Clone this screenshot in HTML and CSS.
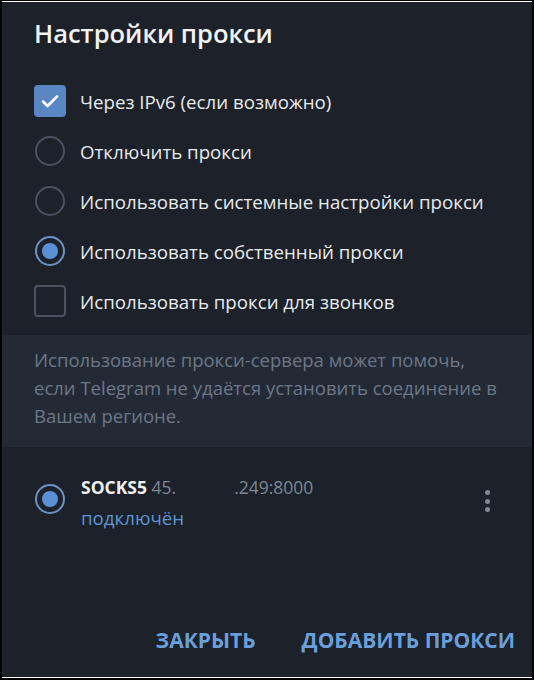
FILE: index.html
```html
<!DOCTYPE html>
<html lang="ru">
<head>
  <meta charset="UTF-8">
  <title>Настройки прокси</title>
  <link rel="stylesheet" href="styles.css">
</head>
<body>
  <div class="dialog">
    <h1 class="title">Настройки прокси</h1>

    <div class="options">
      <div class="option">
        <span class="mark"><span class="check checked">
          <svg width="18" height="14" viewBox="0 0 18 14"><path d="M2 7.5l4.5 4.5L16 2.5" fill="none" stroke="#fff" stroke-width="2.6" stroke-linecap="round" stroke-linejoin="round"/></svg>
        </span></span>
        <span class="label">Через IPv6 (если возможно)</span>
      </div>
      <div class="option">
        <span class="mark"><span class="radio"></span></span>
        <span class="label">Отключить прокси</span>
      </div>
      <div class="option">
        <span class="mark"><span class="radio"></span></span>
        <span class="label">Использовать системные настройки прокси</span>
      </div>
      <div class="option">
        <span class="mark"><span class="radio on"></span></span>
        <span class="label">Использовать собственный прокси</span>
      </div>
      <div class="option">
        <span class="mark"><span class="check"></span></span>
        <span class="label">Использовать прокси для звонков</span>
      </div>
    </div>

    <div class="about">
      Использование прокси-сервера может помочь, если Telegram не удаётся установить соединение в Вашем регионе.
    </div>

    <div class="proxy">
      <span class="mark"><span class="radio on"></span></span>
      <div class="proxy-info">
        <div class="proxy-addr"><b>SOCKS5</b> 45.<span class="hidden-ip"></span>.249:8000</div>
        <div class="proxy-status">подключён</div>
      </div>
      <span class="more"><i></i><i></i><i></i></span>
    </div>

    <div class="actions">
      <button class="btn">Закрыть</button>
      <button class="btn">Добавить прокси</button>
    </div>
  </div>
</body>
</html>
```

FILE: styles.css
```css
html, body {
  margin: 0;
  height: 100%;
}
body {
  background-color: #000;
  font-family: "Open Sans", "Noto Sans", sans-serif;
  padding: 1px 2px 2px 2px;
  box-sizing: border-box;
}
.dialog {
  background-color: #1c212a;
  height: 100%;
  box-sizing: border-box;
  border-top: 1px solid #fff;
  border-bottom: 1px solid #fff;
  display: flex;
  flex-direction: column;
}
.title {
  margin: 0;
  padding: 14px 32px 0;
  font-size: 25.5px;
  font-weight: 600;
  line-height: 34px;
  color: #f3f3f3;
}
.options {
  padding: 26px 32px 0;
}
.option {
  display: flex;
  align-items: center;
  height: 50px;
}
.mark {
  width: 32px;
  display: flex;
  justify-content: center;
  flex-shrink: 0;
}
.label {
  font-size: 18.7px;
  color: #e8eaec;
  margin-left: 14px;
}
.check {
  width: 28px;
  height: 28px;
  border: 2px solid #4a5260;
  border-radius: 4px;
  display: flex;
  align-items: center;
  justify-content: center;
}
.check.checked {
  background-color: #5a87c4;
  border-color: #5a87c4;
}
.radio {
  width: 26px;
  height: 26px;
  border: 2.5px solid #4a5260;
  border-radius: 50%;
  display: flex;
  align-items: center;
  justify-content: center;
}
.radio.on {
  border-color: #6c93c8;
}
.radio.on::after {
  content: "";
  width: 16px;
  height: 16px;
  border-radius: 50%;
  background-color: #5b90d6;
}
.about {
  margin-top: 9px;
  background-color: #232a36;
  color: #6c7786;
  font-size: 18.5px;
  line-height: 28px;
  padding: 11px 32px 17px;
}
.proxy {
  display: flex;
  align-items: flex-start;
  padding: 29px 32px 0;
}
.proxy .mark {
  margin-top: 8px;
}
.proxy-info {
  margin-left: 15px;
  flex: 1;
  line-height: 22px;
}
.proxy-addr {
  font-size: 17.5px;
  color: #7d8896;
}
.proxy-addr b {
  color: #f0f0f0;
  font-weight: 700;
}
.hidden-ip {
  display: inline-block;
  width: 58px;
}
.proxy-status {
  font-size: 18.7px;
  color: #5e95d3;
  margin-top: 9px;
}
.more {
  display: flex;
  flex-direction: column;
  gap: 3.5px;
  margin: 14px 10px 0 0;
}
.more i {
  width: 5px;
  height: 5px;
  border-radius: 50%;
  background-color: #7d8896;
}
.actions {
  margin-top: auto;
  display: flex;
  justify-content: flex-end;
  gap: 38px;
  padding: 0 13px 15px;
}
.btn {
  background: none;
  border: none;
  padding: 8px 4px;
  font-family: inherit;
  font-size: 21px;
  font-weight: 700;
  text-transform: uppercase;
  color: #6b9fdc;
  cursor: pointer;
}
```
